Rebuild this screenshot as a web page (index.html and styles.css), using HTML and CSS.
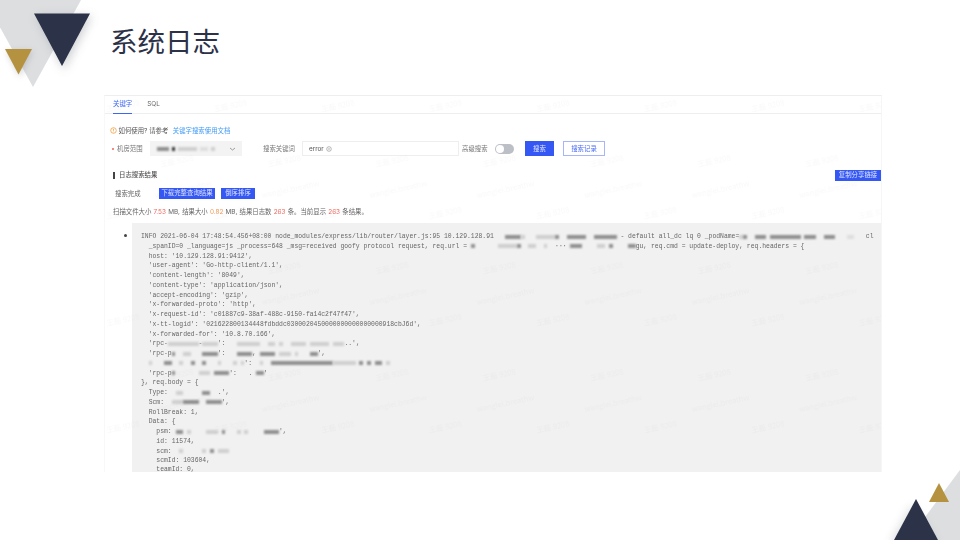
FILE: index.html
```html
<!DOCTYPE html>
<html lang="zh-CN">
<head>
<meta charset="utf-8">
<title>系统日志</title>
<link rel="stylesheet" href="styles.css">
</head>
<body>
<main class="slide">
  <svg class="corner corner-tl" width="110" height="100" viewBox="0 0 110 100" aria-hidden="true">
    <defs>
      <filter id="soft" x="-40%" y="-40%" width="180%" height="180%"><feGaussianBlur stdDeviation="5"/></filter>
      <filter id="softer" x="-40%" y="-40%" width="180%" height="180%"><feGaussianBlur stdDeviation="3"/></filter>
    </defs>
    <polygon points="-15,0 81,0 33,87" fill="#dcdee0"/>
    <polygon points="36,16 92,16 64,70" fill="#8a8d94" opacity=".4" filter="url(#soft)"/>
    <polygon points="6,51 33,51 20,77" fill="#8a8d94" opacity=".35" filter="url(#softer)"/>
    <polygon points="34,13.5 90,13.5 62,66" fill="#2c3247"/>
    <polygon points="5,49 32,49 18.5,74.500" fill="#b5923f"/>
  </svg>
  <svg class="corner corner-br" width="110" height="80" viewBox="850 460 110 80" aria-hidden="true">
    <polygon points="960,470 960,540 908,540" fill="#dcdee0"/>
    <polygon points="912,505 890,544 938,544" fill="#8a8d94" opacity=".3" filter="url(#soft)"/>
    <polygon points="916,499 894,540 938,540" fill="#2c3247"/>
    <polygon points="939,483 929,502 949,502" fill="#b5923f"/>
  </svg>

  <h1 class="title">系统日志</h1>

  <section class="shot">
    <nav class="tabs">
      <span class="tab tab-active">关键字</span>
      <span class="tab">SQL</span>
    </nav>

    <p class="help">
      <svg class="help-icon" width="7" height="7" viewBox="0 0 7 7" aria-hidden="true"><circle cx="3.500" cy="3.500" r="2.800" fill="none" stroke="#f0a040" stroke-width=".8"/><path d="M3.500 1.800v2M3.500 4.600v.6" stroke="#f0a040" stroke-width=".8"/></svg>
      <span>如何使用? 请参考</span>
      <a class="link">关键字搜索使用文档</a>
    </p>

    <div class="query">
      <span class="dot"></span>
      <label class="lab lab-room">机房范围</label>
      <div class="select">
        <i class="r w3 dark"></i><i class="r w1 black"></i><i class="r w5"></i><i class="r w2 faint"></i><i class="r w1"></i>
        <svg class="chev" width="7" height="4" viewBox="0 0 7 4" aria-hidden="true"><path d="M1 1l2.500 2L6 1" fill="none" stroke="#777" stroke-width=".7"/></svg>
      </div>
      <label class="lab lab-key">搜索关键词</label>
      <div class="input"><span>error</span><svg width="6" height="6" viewBox="0 0 6 6" aria-hidden="true"><circle cx="3" cy="3" r="2.300" fill="none" stroke="#888" stroke-width=".6"/><circle cx="3" cy="3" r=".8" fill="#aaa"/></svg></div>
      <label class="lab lab-adv">高级搜索</label>
      <span class="toggle"><span class="knob"></span></span>
      <button class="btn btn-search">搜索</button>
      <button class="btn btn-ghost">搜索记录</button>
    </div>

    <div class="result-head">
      <h2 class="result-title">日志搜索结果</h2>
      <button class="btn btn-small btn-share">复制分享链接</button>
    </div>

    <div class="actions">
      <span class="done">搜索完成</span>
      <button class="btn btn-small btn-dl">下载完整查询结果</button>
      <button class="btn btn-small btn-sort">倒序排序</button>
    </div>

    <p class="stats">扫描文件大小 <b>7.53</b> MB, 结果大小 <b class="orange">0.82</b> MB, 结果日志数 <b>263</b> 条。当前显示 <b>263</b> 条结果。</p>

    <div class="log-wrap">
      <span class="bullet"></span>
      <div class="log">
<div>INFO 2021-06-04 17:48:54.456+08:00 node_modules/express/lib/router/layer.js:95 10.129.128.91   <i class="r w4 dark"></i><i class="r w1"></i>   <i class="r w5"></i><i class="r w1 dark"></i>  <i class="r w5 dark"></i>  <i class="r w6 dark"></i> - default all_dc lq 0 _podName=<i class="r w1"></i><i class="r w1 dark"></i>  <i class="r w3 dark"></i> <i class="r w8 dark"></i> <i class="r w3 dark"></i>  <i class="r w3 dark"></i>   <i class="r w2 faint"></i>   cl</div>
<div>  _spanID=0 _language=js _process=648 _msg=received goofy protocol request, req.url = <i class="r w1 dark"></i>      <i class="r w5"></i><i class="r w1 dark"></i>  <i class="r w2"></i>  <i class="r w1"></i>  ··· <i class="r w3 dark"></i>    <i class="r w2"></i> <i class="r w1 dark"></i>    <i class="r w2 dark"></i>gu, req.cmd = update-deploy, req.headers = {</div>
<div>  host: '10.129.128.91:9412',</div>
<div>  'user-agent': 'Go-http-client/1.1',</div>
<div>  'content-length': '8049',</div>
<div>  'content-type': 'application/json',</div>
<div>  'accept-encoding': 'gzip',</div>
<div>  'x-forwarded-proto': 'http',</div>
<div>  'x-request-id': 'c01887c9-38af-488c-9150-fa14c2f47f47',</div>
<div>  'x-tt-logid': '021622800134448fdbddc0300020450000000000000000918cbJ6d',</div>
<div>  'x-forwarded-for': '10.8.70.166',</div>
<div>  'rpc-<i class="r w8"></i>-<i class="r w4"></i>':   <i class="r w6"></i>  <i class="r w2"></i> <i class="r w1"></i>  <i class="r w4"></i> <i class="r w5"></i> <i class="r w3"></i>..',</div>
<div>  'rpc-p<i class="r w1 dark"></i>  <i class="r w2"></i>   <i class="r w4 dark"></i>':   <i class="r w4 dark"></i>, <i class="r w4 dark"></i> <i class="r w3"></i> <i class="r w1"></i>   <i class="r w2 dark"></i>',</div>
<div>  <i class="r w1"></i>   <i class="r w2 dark"></i>  <i class="r w1"></i>  <i class="r w1 dark"></i>  <i class="r w1 dark"></i>   <i class="r w1"></i>   <i class="r w1"></i> <i class="r w1"></i>':  <i class="r w1"></i>  <i class="r w16 dark"></i><i class="r w6"></i> <i class="r w1 dark"></i> <i class="r w1 dark"></i> <i class="r w2 dark"></i> <i class="r w1"></i></div>
<div>  'rpc-p<i class="r w1 dark"></i>      <i class="r w3"></i> <i class="r w4 dark"></i>':   . <i class="r w2 dark"></i>'</div>
<div>}, req.body = {</div>
<div>  Type:  <i class="r w2"></i>     <i class="r w2 dark"></i>  .',</div>
<div>  Scm:  <i class="r w3"></i><i class="r w4 dark"></i>  <i class="r w4 dark"></i>',</div>
<div>  RollBreak: 1,</div>
<div>  Data: {</div>
<div>    psm: <i class="r w2 dark"></i> <i class="r w1"></i>    <i class="r w3"></i> <i class="r w1 dark"></i>   <i class="r w1"></i> <i class="r w1"></i>    <i class="r w4 dark"></i>',</div>
<div>    id: 11574,</div>
<div>    scm:  <i class="r w1"></i>     <i class="r w1"></i> <i class="r w1 dark"></i> <i class="r w3"></i></div>
<div>    scmId: 103604,</div>
<div class="log-last">    teamId: 0,</div>
      </div>
    </div>

    <svg class="marks" width="778" height="377" aria-hidden="true">
      <defs>
        <pattern id="marks" x="2" y="-2" width="107.500" height="107" patternUnits="userSpaceOnUse">
          <text class="mark" x="0" y="18" transform="rotate(-12 0 18)">王磊 9208</text>
          <text class="mark" x="54" y="73" transform="rotate(-12 54 73)">王磊 9208</text>
          <text class="mark" x="48" y="104" transform="rotate(-12 48 104)">wanglei.breathw</text>
        </pattern>
      </defs>
      <rect width="778" height="377" fill="url(#marks)"/>
    </svg>
  </section>
</main>
</body>
</html>
```

FILE: styles.css
```css
* { box-sizing: border-box; }
html, body { margin: 0; padding: 0; background: #fff; }
.slide {
  position: relative;
  width: 960px;
  height: 540px;
  overflow: hidden;
  background: #fff;
  font-family: "Noto Sans CJK SC", "Noto Sans", sans-serif;
}
.corner { position: absolute; }
.corner-tl { left: 0; top: 0; }
.corner-br { right: 0; bottom: 0; }

.title {
  margin: 0;
  height: 95px;
  padding: 21px 0 0 110px;
  font-size: 27.500px;
  line-height: 38px;
  font-weight: 400;
  color: #2c3247;
}

.shot {
  position: relative;
  width: 778px;
  height: 377px;
  margin-left: 104px;
  background: #fff;
  border-top: 1px solid #eeeeee;
  border-right: 1px solid #f6f6f6;
  border-left: 1px solid #f8f8f8;
  display: flex;
  flex-direction: column;
  overflow: hidden;
  font-family: Inter, "Noto Sans CJK SC", sans-serif;
  font-size: 6.400px;
  color: #666;
  filter: blur(.6px);
}

.tabs {
  flex: none;
  display: flex;
  gap: 15px;
  height: 18px;
  padding-left: 8px;
  border-bottom: 1px solid #eeeeee;
}
.tab { line-height: 16px; height: 18px; }
.tab-active {
  color: #3d66f5;
  border-bottom: 1px solid #3d66f5;
}

.help {
  flex: none;
  display: flex;
  align-items: center;
  height: 12px;
  margin: 10px 0 0 5px;
  gap: 1.500px;
  color: #555;
}
.help-icon { flex: none; }
.link { color: #3f9bf5; margin-left: 3px; }

.query {
  flex: none;
  display: flex;
  align-items: center;
  height: 15px;
  margin-top: 5px;
  padding-left: 7px;
}
.dot {
  flex: none;
  width: 2px;
  height: 2px;
  border-radius: 50%;
  background: #f0605a;
  margin-right: 3px;
}
.lab { flex: none; color: #777; }
.lab-room { width: 33px; }
.select {
  flex: none;
  display: flex;
  align-items: center;
  gap: 3px;
  width: 92px;
  height: 15px;
  padding-left: 7px;
  background: #f3f3f3;
}
.chev { margin-left: auto; margin-right: 6px; }
.lab-key { margin-left: 21px; width: 39px; }
.input {
  flex: none;
  display: flex;
  align-items: center;
  gap: 2px;
  width: 157px;
  height: 15px;
  padding-left: 6px;
  border: 1px solid #eeeeee;
  color: #555;
}
.lab-adv { margin-left: 3px; width: 33px; }
.toggle {
  flex: none;
  display: block;
  width: 19px;
  height: 10px;
  border-radius: 5px;
  background: #bcbfc5;
  padding: 1px;
}
.knob {
  display: block;
  width: 8px;
  height: 8px;
  border-radius: 50%;
  background: #fff;
}
.btn {
  flex: none;
  font: inherit;
  padding: 0;
  border: 1px solid #3558f5;
  background: #3558f5;
  color: #dfe5ff;
  height: 15px;
  line-height: 12px;
  text-align: center;
}
.btn-search { width: 29px; margin-left: 11px; }
.btn-ghost {
  width: 42px;
  margin-left: 9px;
  background: #fff;
  color: #4a6cf5;
  border-color: #a5b7fa;
}
.btn-small { height: 11px; line-height: 9px; }

.result-head {
  flex: none;
  display: flex;
  align-items: center;
  justify-content: space-between;
  height: 11px;
  margin-top: 14px;
  padding-left: 8px;
}
.result-title {
  margin: 0;
  padding-left: 4px;
  border-left: 2px solid #444;
  font-size: 6.400px;
  line-height: 7px;
  font-weight: 500;
  color: #555;
}
.btn-share { width: 46px; }

.actions {
  flex: none;
  display: flex;
  align-items: center;
  height: 11px;
  margin-top: 7px;
  padding-left: 10px;
}
.done { width: 44px; color: #666; }
.btn-dl { width: 56px; }
.btn-sort { width: 34px; margin-left: 6px; }

.stats {
  flex: none;
  margin: 8px 0 0 8px;
  height: 10px;
  line-height: 10px;
  color: #666;
  word-spacing: .4px;
}
.stats b { font-weight: 400; color: #ee6a60; }
.stats .orange { color: #f39a5c; }

.log-wrap {
  flex: 1;
  position: relative;
  margin: 6px 0 0 27px;
  min-height: 0;
  background: #f1f1f1;
  padding: 9px 0 0 9px;
}
.bullet {
  position: absolute;
  left: -8px;
  top: 11px;
  width: 3px;
  height: 3px;
  border-radius: 50%;
  background: #444;
}
.log {
  font-family: "Liberation Mono", monospace;
  font-size: 6.400px;
  line-height: 9.750px;
  color: #666;
}
.log div { white-space: pre; }
.log .log-last { line-height: 7px; }

.r {
  display: inline-block;
  height: 4px;
  vertical-align: -.5px;
  background: #cfcfcf;
  filter: blur(.8px);
}
.r.dark { background: #8f8f8f; }
.r.black { background: #333; }
.r.faint { background: #dedede; }
.w1 { width: 3.800px; }
.w2 { width: 7.700px; }
.w3 { width: 11.500px; }
.w4 { width: 15.400px; }
.w5 { width: 19.200px; }
.w6 { width: 23px; }
.w8 { width: 30.700px; }
.w16 { width: 61.400px; }

.marks {
  position: absolute;
  left: 0;
  top: 0;
  pointer-events: none;
}
.mark {
  font-family: "Noto Sans CJK SC", sans-serif;
  font-size: 7.500px;
  fill: #000;
  fill-opacity: .025;
}
```
